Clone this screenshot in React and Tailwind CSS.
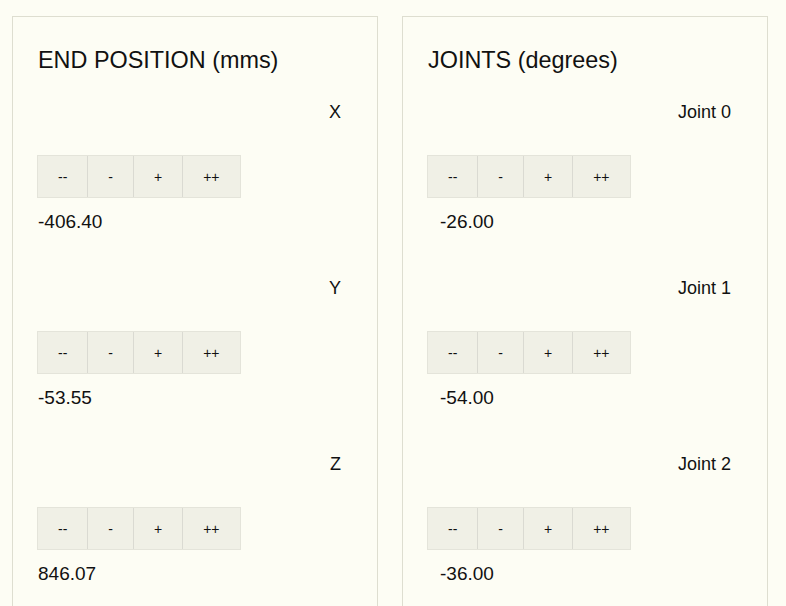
import React from 'react';

const steps = ['--', '-', '+', '++'];

const position = [
  { label: 'X', value: '-406.40' },
  { label: 'Y', value: '-53.55' },
  { label: 'Z', value: '846.07' },
];

const joints = [
  { label: 'Joint 0', value: '-26.00' },
  { label: 'Joint 1', value: '-54.00' },
  { label: 'Joint 2', value: '-36.00' },
];

const StepButtons = () => (
  <div className="-ml-px mt-[31px] flex h-[43px] w-fit border border-[#e4e4da]">
    {steps.map((s, i) => (
      <button
        key={i}
        className="h-full border-r border-[#dadad2] bg-[#f0f0e6] px-5 text-[14px] leading-none text-[#111] last:border-r-0"
      >
        {s}
      </button>
    ))}
  </div>
);

const Row = ({ label, value, indent }) => (
  <div className="pb-[42px]">
    <div className="h-6 pr-[36px] text-right text-[18px] leading-6">{label}</div>
    <StepButtons />
    <div className={`mt-3 h-6 text-[19px] leading-6 ${indent ? 'pl-3' : ''}`}>{value}</div>
  </div>
);

const Panel = ({ title, rows, indent }) => (
  <div className="h-[640px] w-[366px] shrink-0 border border-[#deded0] pl-[25px] pt-[29px]">
    <h2 className="h-7 text-[23.4px] leading-7 text-[#111]">{title}</h2>
    <div className="mt-[26px]">
      {rows.map((r) => (
        <Row key={r.label} label={r.label} value={r.value} indent={indent} />
      ))}
    </div>
  </div>
);

export default function App() {
  return (
    <div
      className="flex h-[606px] gap-6 overflow-hidden bg-[#fdfdf4] pl-3 pt-4 text-[#111]"
      style={{ fontFamily: '"Liberation Sans", Arial, sans-serif' }}
    >
      <Panel title="END POSITION (mms)" rows={position} />
      <Panel title="JOINTS (degrees)" rows={joints} indent />
    </div>
  );
}
